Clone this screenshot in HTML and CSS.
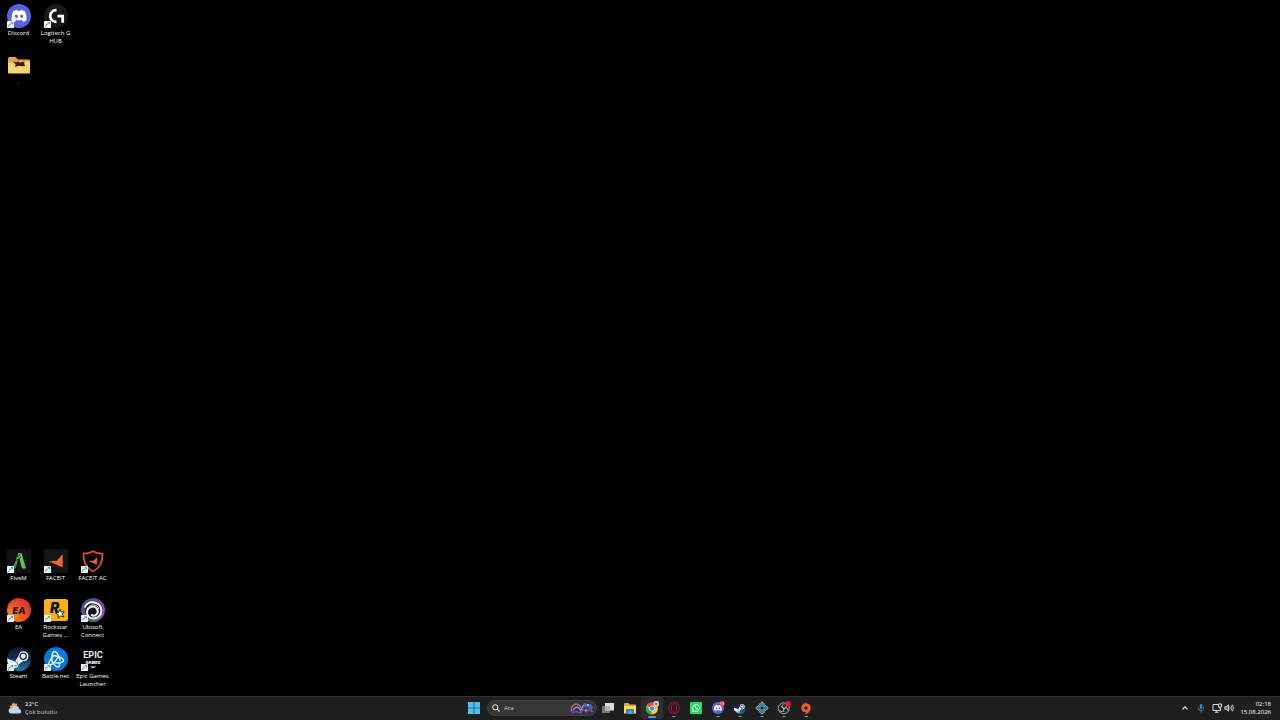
FILE: index.html
```html
<!DOCTYPE html>
<html lang="tr">
<head>
<meta charset="utf-8">
<title>Masaüstü</title>
<link rel="stylesheet" href="styles.css">
</head>
<body>
<svg class="defs" aria-hidden="true">
  <defs>
    <symbol id="link" viewBox="0 0 7 7"><rect width="7" height="7" rx=".6" fill="#f4f8fb"/><path d="M1.600 5.600C1.700 4 2.400 3.100 4 3" fill="none" stroke="#1b7fb5" stroke-width=".9"/><path d="M3.400 1.300h2.400v2.500z" fill="#1b7fb5"/></symbol>
    <symbol id="discord" viewBox="0 0 24 24"><circle cx="12" cy="12" r="12" fill="#5a62e4"/><path d="M8.600 6.200 10 5.800l.6 1q1.400-.2 2.800 0l.6-1 1.500.4q1.500.3 2.200.9 2.200 3.800 1.900 8.900-1.600 1.400-3.700 1.800l-1-1.700q-2.900.6-5.800 0l-1 1.700q-2.100-.4-3.700-1.800-.3-5.100 1.900-8.900.8-.6 2.300-.9z" fill="#fff"/><ellipse cx="9.400" cy="12.300" rx="1.500" ry="1.700" fill="#5a62e4"/><ellipse cx="14.600" cy="12.300" rx="1.500" ry="1.700" fill="#5a62e4"/></symbol>
    <linearGradient id="steam-bg" x1="0" y1="0" x2="0" y2="1"><stop stop-color="#10182f"/><stop offset=".5" stop-color="#142c50"/><stop offset="1" stop-color="#1b83b5"/></linearGradient>
    <symbol id="steam" viewBox="0 0 24 24"><circle cx="12" cy="12" r="12" fill="url(#steam-bg)"/><path d="M.2 11.500 8 14.500l3.500-5.500a5 5 0 1 1 4.300 5.200l-4.300 3.300a3.700 3.700 0 0 1-7.200 1L.9 16.800Q0 14 .2 11.500z" fill="#f2f5f8"/><circle cx="16.200" cy="9.200" r="3.100" fill="#f2f5f8" stroke="#18345b" stroke-width="1.300"/><path d="m5.900 17.900 1.700.7a2 2 0 1 0 1.300-3.700l-1.300-.5" fill="none" stroke="#24557e" stroke-width=".8"/></symbol>
  </defs>
</svg>
<main class="desktop">
  <section class="icons icons-top">
    <button class="shortcut"><span class="art"><svg viewBox="0 0 24 24"><use href="#discord"/></svg><svg class="link"><use href="#link"/></svg></span><span class="label">Discord</span></button>
    <button class="shortcut"><span class="art"><svg viewBox="0 0 24 24"><circle cx="12" cy="12" r="12" fill="#181818"/><path d="M12.500 6.200H12a5.800 5.800 0 0 0 0 11.600h.5M13.500 12.200h5.200v6.500" fill="none" stroke="#fff" stroke-width="2.700"/></svg><svg class="link"><use href="#link"/></svg></span><span class="label">Logitech G HUB</span></button>
    <button class="shortcut folder"><span class="art"><svg viewBox="0 0 24 24"><path d="M1 5.500Q1 4 2.500 4h6l2.500 2.500h10.500Q23 6.500 23 8v5H1z" fill="#dca83d"/><path d="M1 9.500h6.500l2-1H23v11q0 1-1 1H2q-1 0-1-1z" fill="#f8d577"/><path d="m6 8.500 3 .8 2-1 2 1.200 4.500-1-.3 2.500 1 2-4 .2-2.500-.5-3.700 1.200.7-2.200z" fill="#40180f"/></svg></span><span class="label">.</span></button>
  </section>
  <section class="icons icons-bottom">
    <button class="shortcut"><span class="art"><svg viewBox="0 0 24 24"><path d="M0 0h24v24H0z" fill="#111"/><path d="m5 19.500 4-8 2.300-1.500-2.800 9.500z" fill="#329a38"/><path d="M9.600 8.800 11.500 4h3l4.500 15.500h-4L12.300 9.500l-3.300 2.300z" fill="#63bc58"/><path d="m10 8 3.200-2.600M9.800 11.200l4-3" stroke="#111" stroke-width=".9"/></svg><svg class="link"><use href="#link"/></svg></span><span class="label">FiveM</span></button>
    <button class="shortcut"><span class="art"><svg viewBox="0 0 24 24"><path d="M0 0h24v24H0z" fill="#151515"/><path d="M4.500 12.200 13 11.700 18.600 5.200v13.300q-7-3.500-14.100-6.300z" fill="#f26430"/></svg><svg class="link"><use href="#link"/></svg></span><span class="label">FACEIT</span></button>
    <button class="shortcut"><span class="art"><svg viewBox="0 0 24 24"><path d="M12 2.200Q16 4.600 21.500 4.600q.5 12.500-9.500 17.800Q2 17.100 2.500 4.600 8 4.600 12 2.200z" fill="none" stroke="#dc542b" stroke-width="1.700"/><path d="m7.300 12 4.900-.3 3.800-3.500v7.200z" fill="#ee612f"/></svg><svg class="link"><use href="#link"/></svg></span><span class="label">FACEIT AC</span></button>
    <button class="shortcut"><span class="art"><svg viewBox="0 0 24 24"><defs><radialGradient id="ea-bg" cx=".2" cy=".8" r=".9"><stop stop-color="#ff921f"/><stop offset=".5" stop-color="#f3581e"/><stop offset="1" stop-color="#d7322e"/></radialGradient></defs><circle cx="12" cy="12" r="12" fill="url(#ea-bg)"/><text x="12" y="15.500" text-anchor="middle" class="ea">EA</text></svg><svg class="link"><use href="#link"/></svg></span><span class="label">EA</span></button>
    <button class="shortcut"><span class="art"><svg viewBox="0 0 24 24"><rect y="1" width="24" height="22" rx="2.500" fill="#f8b414"/><text x="6" y="14.500" class="rockstar">R</text><path d="m16 11.300 1.300 2.700 3-.3-2 2.300 1.500 2.900-3.100-1-2.500 2.100.1-3.200-2.700-1.700 3-.7z" fill="#fff" stroke="#171205" stroke-width=".9"/></svg><svg class="link"><use href="#link"/></svg></span><span class="label">Rockstar Games ...</span></button>
    <button class="shortcut"><span class="art"><svg viewBox="0 0 24 24"><defs><linearGradient id="ubi-bg" x2="1" y2="1"><stop stop-color="#126e70"/><stop offset=".4" stop-color="#70429c"/><stop offset=".75" stop-color="#8e4db5"/><stop offset="1" stop-color="#276cad"/></linearGradient></defs><circle cx="12" cy="12" r="12" fill="url(#ubi-bg)"/><path d="M1.500 17A11.500 11.500 0 0 0 17 22.300L13 16z" fill="#2e8b40"/><circle cx="12" cy="12.500" r="8" fill="#17141c"/><path d="M3.800 9.500C6.500 1.500 20.500 3 20.300 12.800c-.3 8.500-11.800 10.200-14 3.200C4.500 8.900 13.700 6.100 16.300 11.500c2 4.800-3.500 7.800-6 5" fill="none" stroke="#f8f5fb" stroke-width="2"/><path d="M6.500 10.500C9 5.500 16.500 6 18 11" fill="none" stroke="#f8f5fb" stroke-width="1"/><circle cx="12" cy="13.500" r="2" fill="#17141c"/></svg><svg class="link"><use href="#link"/></svg></span><span class="label">Ubisoft Connect</span></button>
    <button class="shortcut"><span class="art"><svg viewBox="0 0 24 24"><use href="#steam"/></svg><svg class="link"><use href="#link"/></svg></span><span class="label">Steam</span></button>
    <button class="shortcut"><span class="art"><svg viewBox="0 0 24 24"><circle cx="12" cy="12" r="12" fill="#0878d8"/><g fill="none" stroke="#e3f4ff" stroke-width="1.400"><path d="M8 15C7.500 10 8 4.500 10.500 4.500c2.500 0 5 5 5.500 9.500"/><path d="M9.500 8.500c5 .5 10.500 3 10 5.200-.5 2.200-6 3-10.500 1.700"/><path d="M14.500 9.500C12 14 7.500 18.800 5.500 17.500c-1.600-1.200 1-6 4.500-9"/><path d="M8 14.500c2 3.500 5 6.200 6.500 5.300 1-.6 1.200-2.500 1-4.500"/></g></svg><svg class="link"><use href="#link"/></svg></span><span class="label">Battle.net</span></button>
    <button class="shortcut"><span class="art"><svg viewBox="0 0 24 24"><text x="12" y="11" text-anchor="middle" class="epic">EPIC</text><text x="12" y="17" text-anchor="middle" class="epic-games">GAMES</text><path d="M8.700 19.500h6.600L12 21.300z" fill="#e9e9e9"/></svg><svg class="link"><use href="#link"/></svg></span><span class="label">Epic Games Launcher</span></button>
  </section>
</main>
<footer class="taskbar">
  <button class="weather">
    <svg viewBox="0 0 14 14"><path d="m6 1 1.200 2 2-.5-.4 2.200L11 6 8 10H3L1 8.300l1.500-1.500L1.500 5l2.200-.5L4 2.300l1.500.5z" fill="#e9a64b"/><path d="M3.500 12.500a2.700 2.700 0 1 1 .5-5.300 3.800 3.800 0 0 1 7.200.8 2.300 2.300 0 0 1 .3 4.500z" fill="#bdd5f3"/></svg>
    <span class="weather-text"><span class="temp">22°C</span><span>Çok bulutlu</span></span>
  </button>
  <nav class="apps">
    <button class="app" aria-label="Başlat"><svg class="start" viewBox="0 0 12 12"><path d="M0 0h5.700v5.700H0zM6.300 0H12v5.700H6.300zM0 6.300h5.700V12H0zM6.300 6.300H12V12H6.300z" fill="#4cc2ee"/></svg></button>
    <label class="search">
      <svg class="lens" viewBox="0 0 8 8"><circle cx="3.300" cy="3.300" r="2.600" fill="none" stroke="#eee"/><path d="m5.200 5.200 2.300 2.300" stroke="#eee" stroke-width="1.200"/></svg>
      <input type="text" placeholder="Ara" aria-label="Ara">
      <svg class="spotlight" viewBox="0 0 26 14"><path d="M1 11Q0 4 7 2q4-2 8 1l5-1q6 2 5 9l-3 2H4z" fill="#263457"/><path d="M2.500 11C1 5 6 2 9 3.500S14 9 12 12" fill="none" stroke="#bf675d" stroke-width="1.400"/><path d="M4 9.500C7 4 10 6 12 10l2-5q4-3 6 0l3 6" fill="none" stroke="#91a4d3" stroke-width="1.200"/><path d="m3 11.500 5-1 3 1.500 3-4 3 3 5-3 1 3" fill="none" stroke="#8b4779" stroke-width="1.600"/><path d="m14 3 3-1 2 2 3-1 2 4-3 1-2-2-3 1z" fill="#4b67ab"/><circle cx="19" cy="4" r="1" fill="#dbcdf1"/><circle cx="17" cy="9" r="1.200" fill="#b6799a"/></svg>
    </label>
    <button class="app" aria-label="Görev görünümü"><svg viewBox="0 0 14 14"><path d="M1 5h8v7H1z" fill="#777"/><path d="M4 2h9v7.500H4z" fill="#dedede"/><path d="M4 5h5v4.500H4z" fill="#b5b5b5"/></svg></button>
    <button class="app" aria-label="Dosya Gezgini"><svg viewBox="0 0 14 14"><path d="M1 3q0-1 1-1h3.500L7 3.500h5q1 0 1 1V12H1z" fill="#e7a924"/><path d="M1 5h12v7.500H1z" fill="#ffd65a"/><path d="M3 9q0-1 1-1h6q1 0 1 1v3.500H3z" fill="#2b83bd"/><path d="M5.500 10h3v2.500h-3z" fill="#49b3de"/></svg></button>
    <button class="app active" aria-label="Chrome"><svg viewBox="0 0 14 14"><circle cx="7" cy="7.500" r="6" fill="#f5c52c"/><path d="M7 7.500 1.800 4.500A6 6 0 0 1 12.200 4.500H7z" fill="#e3473d"/><path d="M1.800 4.500 5 9.500l2 1-1 3A6 6 0 0 1 1.800 4.500z" fill="#39a757"/><circle cx="7" cy="7.500" r="2.800" fill="#fff"/><circle cx="7" cy="7.500" r="2.200" fill="#4488e8"/><circle cx="11.200" cy="2.800" r="3" fill="#d7c3a6"/><path d="m9.500 3 1.200-1.300 1.700.6-.8 1.800z" fill="#786b5e"/></svg></button>
    <button class="app running" aria-label="Opera GX"><svg viewBox="0 0 14 14"><circle cx="7" cy="7" r="5.500" fill="#2c1119" stroke="#841c38" stroke-width="1.100"/><ellipse cx="7" cy="7" rx="2.500" ry="4.500" fill="#1e1116" stroke="#941f40"/><path d="M7 3v8" stroke="#641b30"/></svg></button>
    <button class="app" aria-label="WhatsApp"><svg viewBox="0 0 14 14"><rect x="1" y="1" width="12" height="12" rx="1" fill="#29d665"/><path d="m3.400 10.600.6-2a3.500 3.500 0 1 1 1.400 1.400z" fill="none" stroke="#fff" stroke-width=".8"/><path d="M5.500 5.200q.3 2.700 3 3.200l.7-.9-1.100-.7-.5.400Q7 7 6.600 6.200l.4-.5-.6-1z" fill="#fff"/></svg></button>
    <button class="app running" aria-label="Discord"><svg viewBox="0 0 14 14"><use href="#discord" x="1" y="1" width="12" height="12"/><circle cx="11" cy="2.700" r="2.700" fill="#e6515d"/><path d="M9.500 2.800h1.200M11.500 1.700h1v2" fill="none" stroke="#ffdadd" stroke-width=".7"/></svg></button>
    <button class="app running" aria-label="Steam"><svg viewBox="0 0 14 14"><use href="#steam" x="1" y="1" width="12" height="12"/></svg></button>
    <button class="app running" aria-label="Oyun kitaplığı"><svg viewBox="0 0 14 14"><g fill="#397790" stroke="#89c9df" stroke-width=".9"><rect x="5" y="1.500" width="4" height="4" rx="1" transform="rotate(45 7 3.500)"/><rect x="1.500" y="5" width="4" height="4" rx="1" transform="rotate(45 3.500 7)"/><rect x="8.500" y="5" width="4" height="4" rx="1" transform="rotate(45 10.500 7)"/><rect x="5" y="8.500" width="4" height="4" rx="1" transform="rotate(45 7 10.500)"/></g><path d="M7 5.200 8.800 7 7 8.800 5.200 7z" fill="#10181c"/></svg></button>
    <button class="app running" aria-label="OBS Studio"><svg viewBox="0 0 14 14"><circle cx="6.800" cy="7.300" r="5.500" fill="#202124" stroke="#b6b6b6" stroke-width=".9"/><g fill="none" stroke="#b6b6b6" stroke-width="1"><path d="M6.500 3.300A2.200 2.200 0 0 0 7 7.500q2.200 0 2.800-2"/><path d="M2.700 9.200A2.200 2.200 0 0 0 6.800 7.500Q6 5.500 4 5.600"/><path d="M10.800 9.500A2.200 2.200 0 0 0 7 7.500q-1.300 2 .2 3.600"/></g><circle cx="11.200" cy="2.700" r="2.700" fill="#ed1921"/></svg></button>
    <button class="app running" aria-label="Origin"><svg viewBox="0 0 14 14"><path d="M7.800.8 7 2.600q4.500 0 4.700 4.300-.1 4.400-5.500 6.600l.7-2.300Q2.400 11 2.300 6.900 2.500 3 5.700 2.400z" fill="#e7602c"/><circle cx="7" cy="7" r="1.800" fill="#292321"/></svg></button>
  </nav>
  <div class="tray">
    <button class="tray-icon" aria-label="Gizli simgeler"><svg viewBox="0 0 10 10"><path d="m2.500 6.300 2.500-2.500 2.500 2.500" fill="none" stroke="#eee" stroke-width="1.100"/></svg></button>
    <button class="tray-icon mic" aria-label="Mikrofon"><svg viewBox="0 0 10 10"><rect x="3.700" y="1" width="2.600" height="5" rx="1.300" fill="#3986bd"/><path d="M2.400 4.500v.7a2.600 2.600 0 0 0 5.200 0v-.7M5 7.800v1.700" fill="none" stroke="#3986bd" stroke-width=".9"/></svg></button>
    <button class="tray-icon" aria-label="Ağ"><svg viewBox="0 0 10 10"><path d="M6 1.500H1v6h7.500V5M3 9.300h3.500M4.800 7.500v1.800" fill="none" stroke="#eee" stroke-width=".9"/><path d="M6.500 1h3v3h-3zM8 4v2" fill="none" stroke="#eee" stroke-width=".9"/></svg></button>
    <button class="tray-icon" aria-label="Ses"><svg viewBox="0 0 10 10"><path d="M.8 3.700h1.500L4.500 1.800v6.400L2.300 6.300H.8z" fill="#777" stroke="#eee" stroke-width=".8"/><path d="M5.800 3.500q1.100 1.500 0 3M7.100 2.500q1.800 2.500 0 5M8.300 1.500q2.300 3.500 0 7" fill="none" stroke="#ddd" stroke-width=".8"/></svg></button>
    <button class="clock"><time>02:18</time><time>15.08.2026</time></button>
  </div>
</footer>
</body>
</html>
```

FILE: styles.css
```css
* { box-sizing: border-box; }

body {
  margin: 0;
  min-height: 100vh;
  display: flex;
  flex-direction: column;
  background: #000;
  color: #fff;
  font-family: "Open Sans", "Noto Sans", sans-serif;
  font-size: 6px;
  font-weight: 500;
  line-height: 8px;
}

button {
  margin: 0;
  padding: 0;
  border: 0;
  background: none;
  color: inherit;
  font: inherit;
}

svg { display: block; }

.defs { position: absolute; width: 0; height: 0; }

.desktop {
  flex: 1;
  display: flex;
  flex-direction: column;
  justify-content: space-between;
  padding-top: 4px;
}

.icons {
  display: grid;
  grid-auto-rows: 49px;
  justify-content: start;
}

.icons-top { grid-template-columns: repeat(2, 37px); }
.icons-bottom { grid-template-columns: repeat(3, 37px); }

.shortcut {
  display: flex;
  flex-direction: column;
  align-items: center;
  gap: 1px;
}

.art {
  position: relative;
  width: 24px;
  height: 24px;
}

.art > svg { width: 24px; height: 24px; }

.art > .link {
  position: absolute;
  left: 0;
  bottom: 0;
  width: 7px;
  height: 7px;
}

.label {
  width: 37px;
  text-align: center;
}

.ea { font: italic 900 9px Inter, sans-serif; fill: #210f0b; }
.rockstar { font: italic 900 14px Inter, sans-serif; fill: #171205; }
.epic { font: 700 9px "Liberation Sans Narrow", Roboto, sans-serif; fill: #eee; }
.epic-games { font: 900 4px Inter, sans-serif; fill: #eee; }

.taskbar {
  display: grid;
  grid-template-columns: 1fr auto 1fr;
  height: 24px;
  padding-bottom: 1px;
  border-top: 1px solid #303030;
  background: #1f1f1f;
}

.weather {
  display: flex;
  align-items: center;
  gap: 3px;
  padding-left: 8px;
  text-align: left;
}

.weather svg { width: 14px; height: 14px; }
.weather-text { display: flex; flex-direction: column; color: #ccc; }
.temp { color: #fff; }

.apps { display: flex; align-items: center; }

.app {
  position: relative;
  display: grid;
  place-items: center;
  width: 22px;
  height: 22px;
}

.app svg { width: 14px; height: 14px; }
.app .start { width: 12px; height: 12px; }
.active { border-radius: 2px; background: #2d2d2d; }

.active::after,
.running::after {
  content: "";
  position: absolute;
  bottom: 2px;
  left: 50%;
  width: 3px;
  height: 1px;
  transform: translateX(-50%);
  background: #999;
}

.active::after { bottom: 1px; width: 8px; height: 2px; border-radius: 1px; background: #3da5df; }

.search {
  display: flex;
  align-items: center;
  gap: 4px;
  width: 110px;
  height: 16px;
  margin-left: 2px;
  padding: 0 1px 0 4px;
  border: 1px solid #414141;
  border-radius: 8px;
  background: #363636;
}

.lens { width: 8px; height: 8px; }

.search input {
  flex: 1;
  min-width: 0;
  padding: 0;
  border: 0;
  outline: 0;
  background: none;
  color: #fff;
  font: inherit;
}

.search input::placeholder { color: #ccc; }
.spotlight { width: 26px; height: 14px; }

.tray {
  display: flex;
  align-items: center;
  justify-content: flex-end;
  padding-right: 9px;
}

.tray-icon { padding: 0 1px; }
.tray-icon svg { width: 10px; height: 10px; }
.mic { margin: 0 4px; }

.clock {
  display: flex;
  flex-direction: column;
  align-items: flex-end;
  margin-left: 5px;
}
```
